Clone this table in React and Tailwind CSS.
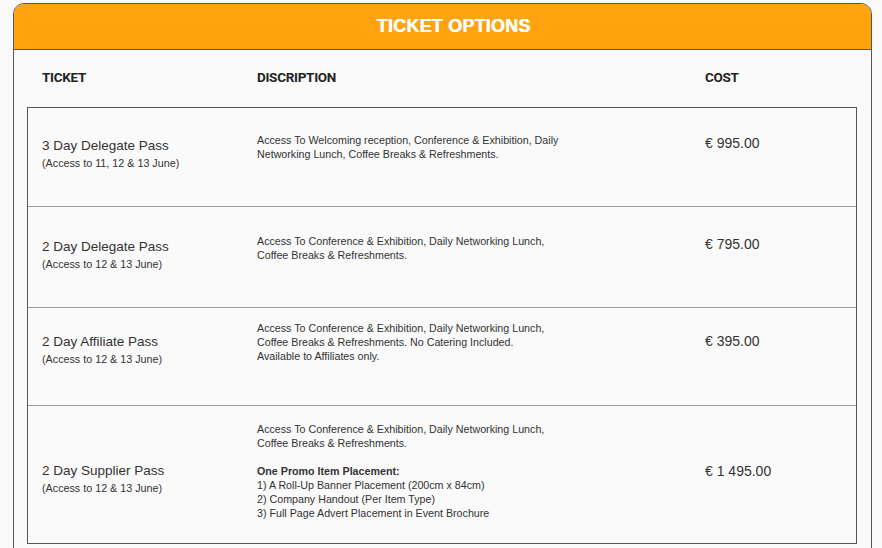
const tickets = [
  {
    name: '3 Day Delegate Pass',
    dates: '(Access to 11, 12 & 13 June)',
    cost: '€ 995.00',
    row: 'h-[99px] border-b border-[#9a9a9a]',
    namePt: 'pt-[30px]',
    descPt: 'pt-[25px]',
    costPt: 'pt-[27px]',
    desc: [['Access To Welcoming reception, Conference & Exhibition, Daily', 'Networking Lunch, Coffee Breaks & Refreshments.']],
  },
  {
    name: '2 Day Delegate Pass',
    dates: '(Access to 12 & 13 June)',
    cost: '€ 795.00',
    row: 'h-[101px] border-b border-[#9a9a9a]',
    namePt: 'pt-[32px]',
    descPt: 'pt-[27px]',
    costPt: 'pt-[29px]',
    desc: [['Access To Conference & Exhibition, Daily Networking Lunch,', 'Coffee Breaks & Refreshments.']],
  },
  {
    name: '2 Day Affiliate Pass',
    dates: '(Access to 12 & 13 June)',
    cost: '€ 395.00',
    row: 'h-[98px] border-b border-[#9a9a9a]',
    namePt: 'pt-[26px]',
    descPt: 'pt-[13px]',
    costPt: 'pt-[25px]',
    desc: [['Access To Conference & Exhibition, Daily Networking Lunch,', 'Coffee Breaks & Refreshments. No Catering Included.', 'Available to Affiliates only.']],
  },
  {
    name: '2 Day Supplier Pass',
    dates: '(Access to 12 & 13 June)',
    cost: '€ 1 495.00',
    row: 'h-[137px]',
    namePt: 'pt-[57px]',
    descPt: 'pt-[16px]',
    costPt: 'pt-[57px]',
    desc: [
      ['Access To Conference & Exhibition, Daily Networking Lunch,', 'Coffee Breaks & Refreshments.'],
      ['1) A Roll-Up Banner Placement (200cm x 84cm)', '2) Company Handout (Per Item Type)', '3) Full Page Advert Placement in Event Brochure'],
    ],
    promo: 'One Promo Item Placement:',
  },
]

export default function App() {
  return (
    <div className="w-[882px] h-[548px] overflow-hidden bg-[#fafafa] pt-[3px] pl-[13px] pr-[10px] font-['Liberation_Sans',Arial,sans-serif]">
      <div className="h-[600px] border border-[#555] rounded-t-[11px] overflow-hidden bg-[#fafafa]">
        {/* Title bar */}
        <div className="h-[46px] bg-[#ffa30f] border-b border-[#555] flex items-center justify-center pl-[22px]">
          <h1 className="text-white text-[18px] font-bold tracking-[0.2px] [text-shadow:0.5px_0_0_#fff] font-['Liberation_Sans',Arial,sans-serif]">
            TICKET OPTIONS
          </h1>
        </div>

        {/* Column headings */}
        <div className="h-[57px] flex items-center pl-[28px] pb-[3px] text-[#222] text-[13.5px] font-bold font-['Roboto',sans-serif] tracking-[-0.3px]">
          <div className="w-[215px]">TICKET</div>
          <div className="w-[448px]">DISCRIPTION</div>
          <div>COST</div>
        </div>

        {/* Table */}
        <div className="ml-[13px] mr-[14px] border border-[#555]">
          {tickets.map(t => (
            <div key={t.name} className={`flex items-start pl-[14px] ${t.row}`}>
              <div className={`w-[215px] ${t.namePt}`}>
                <p className="text-[13.5px] leading-[16px] text-[#333]">{t.name}</p>
                <p className="mt-[2px] text-[10.75px] leading-[15px] text-[#333]">{t.dates}</p>
              </div>
              <div className={`w-[448px] text-[10.7px] leading-[14px] text-[#333] ${t.descPt}`}>
                {t.desc[0].map(l => <p key={l}>{l}</p>)}
                {t.promo && (
                  <div className="mt-[14px]">
                    <p className="font-bold">{t.promo}</p>
                    {t.desc[1].map(l => <p key={l}>{l}</p>)}
                  </div>
                )}
              </div>
              <div className={`text-[14px] leading-[16px] text-[#333] ${t.costPt}`}>{t.cost}</div>
            </div>
          ))}
        </div>
      </div>
    </div>
  )
}
